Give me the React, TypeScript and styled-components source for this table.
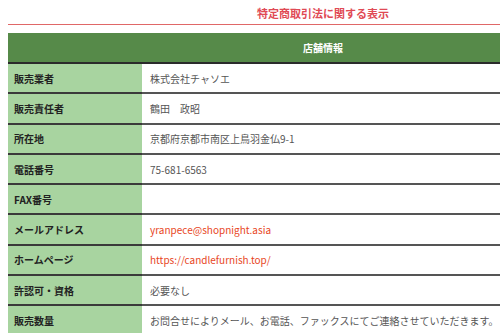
import styled, { createGlobalStyle } from 'styled-components';

interface InfoRow {
  label: string;
  value: string;
  isLink?: boolean;
}

const rows: InfoRow[] = [
  { label: '販売業者', value: '株式会社チャソエ' },
  { label: '販売責任者', value: '鶴田　政昭' },
  { label: '所在地', value: '京都府京都市南区上鳥羽金仏9-1' },
  { label: '電話番号', value: '75-681-6563' },
  { label: 'FAX番号', value: '' },
  { label: 'メールアドレス', value: 'yranpece@shopnight.asia', isLink: true },
  { label: 'ホームページ', value: 'https://candlefurnish.top/', isLink: true },
  { label: '許認可・資格', value: '必要なし' },
  {
    label: '販売数量',
    value: 'お問合せによりメール、お電話、ファックスにてご連絡させていただきます。',
  },
];

const GlobalStyle = createGlobalStyle`
  body {
    margin: 0;
    background: #fff;
    font-family: "Noto Sans CJK JP", "Noto Sans", sans-serif;
  }
`;

function App() {
  return (
    <>
      <GlobalStyle />
      <Page>
        <Title>特定商取引法に関する表示</Title>
        <InfoTable>
          <colgroup>
            <LabelCol />
            <col />
          </colgroup>
          <thead>
            <tr>
              <HeaderCell colSpan={2}>店舗情報</HeaderCell>
            </tr>
          </thead>
          <tbody>
            {rows.map((row) => (
              <tr key={row.label}>
                <LabelCell>{row.label}</LabelCell>
                <ValueCell $isLink={row.isLink}>{row.value}</ValueCell>
              </tr>
            ))}
          </tbody>
        </InfoTable>
      </Page>
    </>
  );
}

const Page = styled.div`
  width: 630px;
  padding: 5px 8px 0;
`;

const Title = styled.h1`
  margin: 0 0 8px;
  padding-bottom: 3px;
  border-bottom: 1.5px solid #e06767;
  font-size: 11px;
  line-height: 16px;
  font-weight: bold;
  color: #e04a55;
  text-align: center;
`;

const InfoTable = styled.table`
  width: 100%;
  border-collapse: collapse;
  table-layout: fixed;
`;

const LabelCol = styled.col`
  width: 134px;
`;

const HeaderCell = styled.th`
  height: 29px;
  padding: 0;
  background: #568a49;
  border-bottom: 2px solid #2b2b2b;
  color: #fff;
  font-size: 10px;
  font-weight: bold;
  text-align: center;
`;

const LabelCell = styled.td`
  height: 28.3px;
  padding: 0 0 0 6px;
  background: #a8d4a0;
  border-bottom: 2px solid #3a3a3a;
  color: #222;
  font-size: 10px;
  font-weight: bold;
  white-space: nowrap;
`;

const ValueCell = styled.td<{ $isLink?: boolean }>`
  height: 28.3px;
  padding: 0 0 0 8px;
  border-bottom: 2px solid #555;
  color: ${({ $isLink }) => ($isLink ? '#e8461e' : '#555')};
  font-size: 10px;
  white-space: nowrap;
`;

export default App;
